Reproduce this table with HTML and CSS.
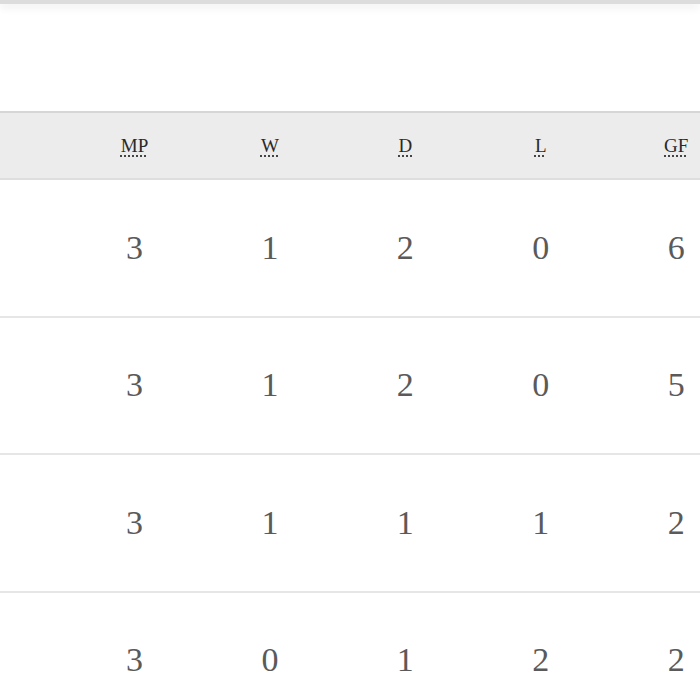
FILE: index.html
```html
<!DOCTYPE html>
<html>
<head>
<meta charset="utf-8">
<link rel="stylesheet" href="styles.css">
</head>
<body>
<div class="topbar"></div>
<div class="wrap">
<table class="standings">
<thead>
<tr>
<th class="team"></th>
<th><abbr title="Matches played">MP</abbr></th>
<th><abbr title="Won">W</abbr></th>
<th><abbr title="Drawn">D</abbr></th>
<th><abbr title="Lost">L</abbr></th>
<th><abbr title="Goals for">GF</abbr></th>
</tr>
</thead>
<tbody>
<tr><td class="team"></td><td>3</td><td>1</td><td>2</td><td>0</td><td>6</td></tr>
<tr><td class="team"></td><td>3</td><td>1</td><td>2</td><td>0</td><td>5</td></tr>
<tr><td class="team"></td><td>3</td><td>1</td><td>1</td><td>1</td><td>2</td></tr>
<tr><td class="team"></td><td>3</td><td>0</td><td>1</td><td>2</td><td>2</td></tr>
</tbody>
</table>
</div>
</body>
</html>
```
FILE: styles.css
```css
html, body {
  margin: 0;
  padding: 0;
  background: #ffffff;
  overflow: hidden;
}
body {
  width: 700px;
  height: 700px;
  font-family: "Liberation Serif", "Times New Roman", serif;
}
.topbar {
  height: 4px;
  background: #dcdcdc;
  box-shadow: 0 3px 9px rgba(0, 0, 0, 0.10);
}
.wrap {
  margin-top: 107px;
  width: 700px;
  overflow: hidden;
}
.standings {
  border-collapse: collapse;
  table-layout: fixed;
  width: 744px;
}
.standings th,
.standings td {
  width: 135.4px;
  padding: 0;
  text-align: center;
  vertical-align: middle;
}
.standings .team {
  width: 66.8px;
}
.standings thead tr {
  background: #ececec;
  border-top: 2px solid #d6d6d6;
  border-bottom: 2px solid #dedede;
}
.standings th {
  height: 65px;
  font-size: 19px;
  font-weight: normal;
  color: #2a2a2a;
}
.standings abbr {
  text-decoration: underline dotted;
  text-decoration-thickness: 2px;
  text-underline-offset: 4px;
  text-decoration-color: #444444;
}
.standings tbody tr {
  border-bottom: 2px solid #e6e6e6;
}
.standings td {
  height: 135.5px;
  font-size: 34px;
  color: #5a5a5a;
}
```
